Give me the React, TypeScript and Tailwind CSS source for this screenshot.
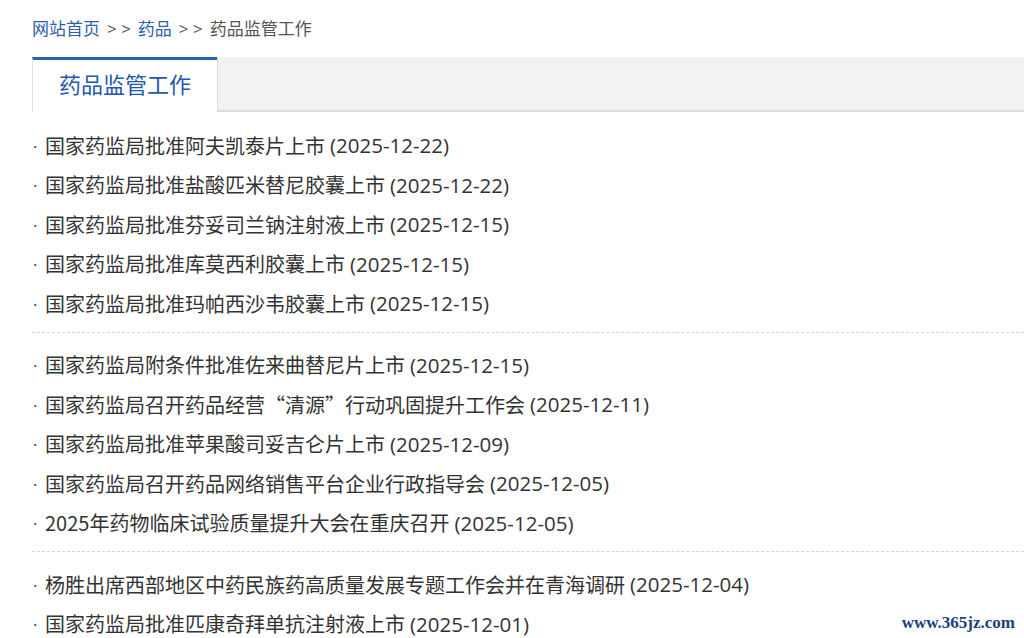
const groups: { title: string; date: string }[][] = [
  [
    { title: "国家药监局批准阿夫凯泰片上市", date: "2025-12-22" },
    { title: "国家药监局批准盐酸匹米替尼胶囊上市", date: "2025-12-22" },
    { title: "国家药监局批准芬妥司兰钠注射液上市", date: "2025-12-15" },
    { title: "国家药监局批准库莫西利胶囊上市", date: "2025-12-15" },
    { title: "国家药监局批准玛帕西沙韦胶囊上市", date: "2025-12-15" },
  ],
  [
    { title: "国家药监局附条件批准佐来曲替尼片上市", date: "2025-12-15" },
    { title: "国家药监局召开药品经营“清源”行动巩固提升工作会", date: "2025-12-11" },
    { title: "国家药监局批准苹果酸司妥吉仑片上市", date: "2025-12-09" },
    { title: "国家药监局召开药品网络销售平台企业行政指导会", date: "2025-12-05" },
    { title: "2025年药物临床试验质量提升大会在重庆召开", date: "2025-12-05" },
  ],
  [
    { title: "杨胜出席西部地区中药民族药高质量发展专题工作会并在青海调研", date: "2025-12-04" },
    { title: "国家药监局批准匹康奇拜单抗注射液上市", date: "2025-12-01" },
  ],
];

const cjk = { fontFamily: '"Noto Sans CJK SC", sans-serif' };
const latin = { fontFamily: '"Open Sans", "Noto Sans CJK SC", sans-serif' };

export default function App() {
  return (
    <div
      className="relative h-[638px] w-[1024px] overflow-hidden bg-white"
      style={latin}
    >
      <div className="pl-[32px]">
        {/* breadcrumb */}
        <div className="flex h-[57px] items-center pt-[1px] text-[17px] text-[#555]">
          <span className="text-[#2f62aa]">网站首页</span>
          <span className="ml-[7px]">&gt; &gt;</span>
          <span className="ml-[7px] text-[#2f62aa]">药品</span>
          <span className="ml-[7px]">&gt; &gt;</span>
          <span className="ml-[7px]">药品监管工作</span>
        </div>

        {/* tab bar */}
        <div className="flex h-[55px]">
          <div className="flex w-[185px] items-center justify-center border-l border-t-[3px] border-l-[#e2e2e2] border-t-[#2f62b4] bg-white pb-[3px] text-[22px] text-[#2457b0]">
            药品监管工作
          </div>
          <div className="flex-1 border-b-[2px] border-l border-b-[#dcdcdc] border-l-[#dedede] bg-[#f2f2f2]" />
        </div>

        {/* list */}
        <div className="pt-[14px]">
          {groups.map((g, gi) => (
            <ul
              key={gi}
              className={
                gi < groups.length - 1
                  ? "border-b border-dashed border-[#d4d4d4] pb-[8px]"
                  : ""
              }
              style={gi > 0 ? { paddingTop: 13 } : undefined}
            >
              {g.map((it, i) => (
                <li
                  key={i}
                  className="flex h-[39.5px] items-center text-[#333]"
                >
                  <span
                    className="w-[13px] shrink-0 text-[19px] text-[#555]"
                    style={{ fontFamily: '"Liberation Sans", sans-serif' }}
                  >
                    ·
                  </span>
                  <span className="text-[20px]" style={cjk}>
                    {it.title}
                  </span>
                  <span className="ml-[5px] text-[20.5px]" style={latin}>
                    ({it.date})
                  </span>
                </li>
              ))}
            </ul>
          ))}
        </div>
      </div>

      {/* watermark */}
      <div
        className="absolute right-[9px] top-[610px] text-[17px] font-bold text-[#1c3f7e]"
        style={{ fontFamily: '"Liberation Serif", serif' }}
      >
        www.365jz.com
      </div>
    </div>
  );
}
